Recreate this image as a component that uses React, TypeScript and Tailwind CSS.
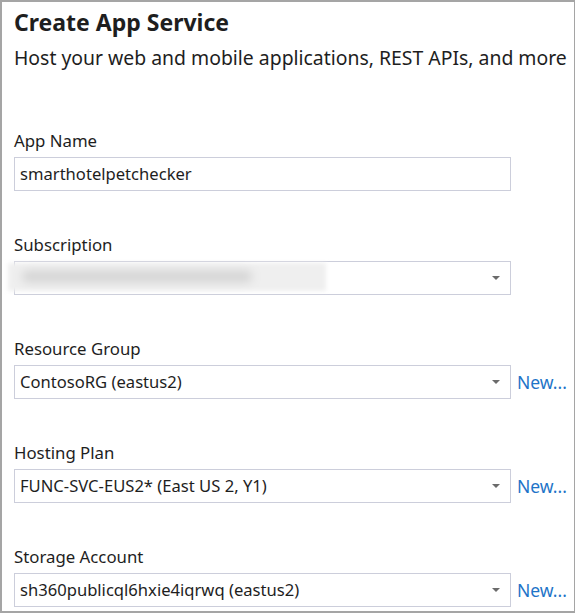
const font = { fontFamily: '"Noto Sans", "Open Sans", sans-serif' };

function Arrow() {
  return (
    <svg width="8" height="4" viewBox="0 0 8 4" className="shrink-0">
      <path d="M0 0 L8 0 L4 4 Z" fill="#6b6b6b" />
    </svg>
  );
}

function Field({
  label,
  value,
  select,
  link,
  blurred,
}: {
  label: string;
  value?: string;
  select?: boolean;
  link?: boolean;
  blurred?: boolean;
}) {
  return (
    <div className="flex flex-col">
      <div className="h-5 text-[16.8px] leading-5 text-[#1e1e1e]">{label}</div>
      <div className="mt-[6px] flex items-center">
        <div className="relative flex h-[34px] w-[497px] items-center border border-[#ccceDB] bg-white pl-[5px] pr-[10px]">
          <span className="flex-1 truncate text-[16.6px] text-[#1e1e1e]">{value}</span>
          {select && <Arrow />}
          {blurred && (
            <div className="absolute left-[-7px] top-[1px] h-[28px] w-[318px] bg-[#efefef] blur-[2px]">
              <span className="ml-[14px] mt-[8px] inline-block h-[11px] w-[230px] rounded-full bg-[#d2d2d2] blur-[4px]" />
            </div>
          )}
        </div>
        {link && <span className="ml-[6px] text-[17.5px] text-[#1e74c8]">New...</span>}
      </div>
    </div>
  );
}

export default function App() {
  return (
    <div className="h-[613px] w-[575px] overflow-hidden bg-white" style={font}>
      <div className="h-full w-full border-2 border-r-[1px] border-[#a5a5a5] pl-[12px]">
        <h1 className="mt-[4px] text-[23px] font-bold leading-8 text-[#1e1e1e]">Create App Service</h1>
        <p className="mt-[8px] whitespace-nowrap text-[19.4px] leading-6 text-[#1e1e1e]">
          Host your web and mobile applications, REST APIs, and more
        </p>
        <div className="mt-[61px] flex flex-col gap-[44px]">
          <Field label="App Name" value="smarthotelpetchecker" />
          <Field label="Subscription" select blurred />
          <Field label="Resource Group" value="ContosoRG (eastus2)" select link />
          <Field label="Hosting Plan" value="FUNC-SVC-EUS2* (East US 2, Y1)" select link />
          <Field label="Storage Account" value="sh360publicql6hxie4iqrwq (eastus2)" select link />
        </div>
      </div>
    </div>
  );
}
